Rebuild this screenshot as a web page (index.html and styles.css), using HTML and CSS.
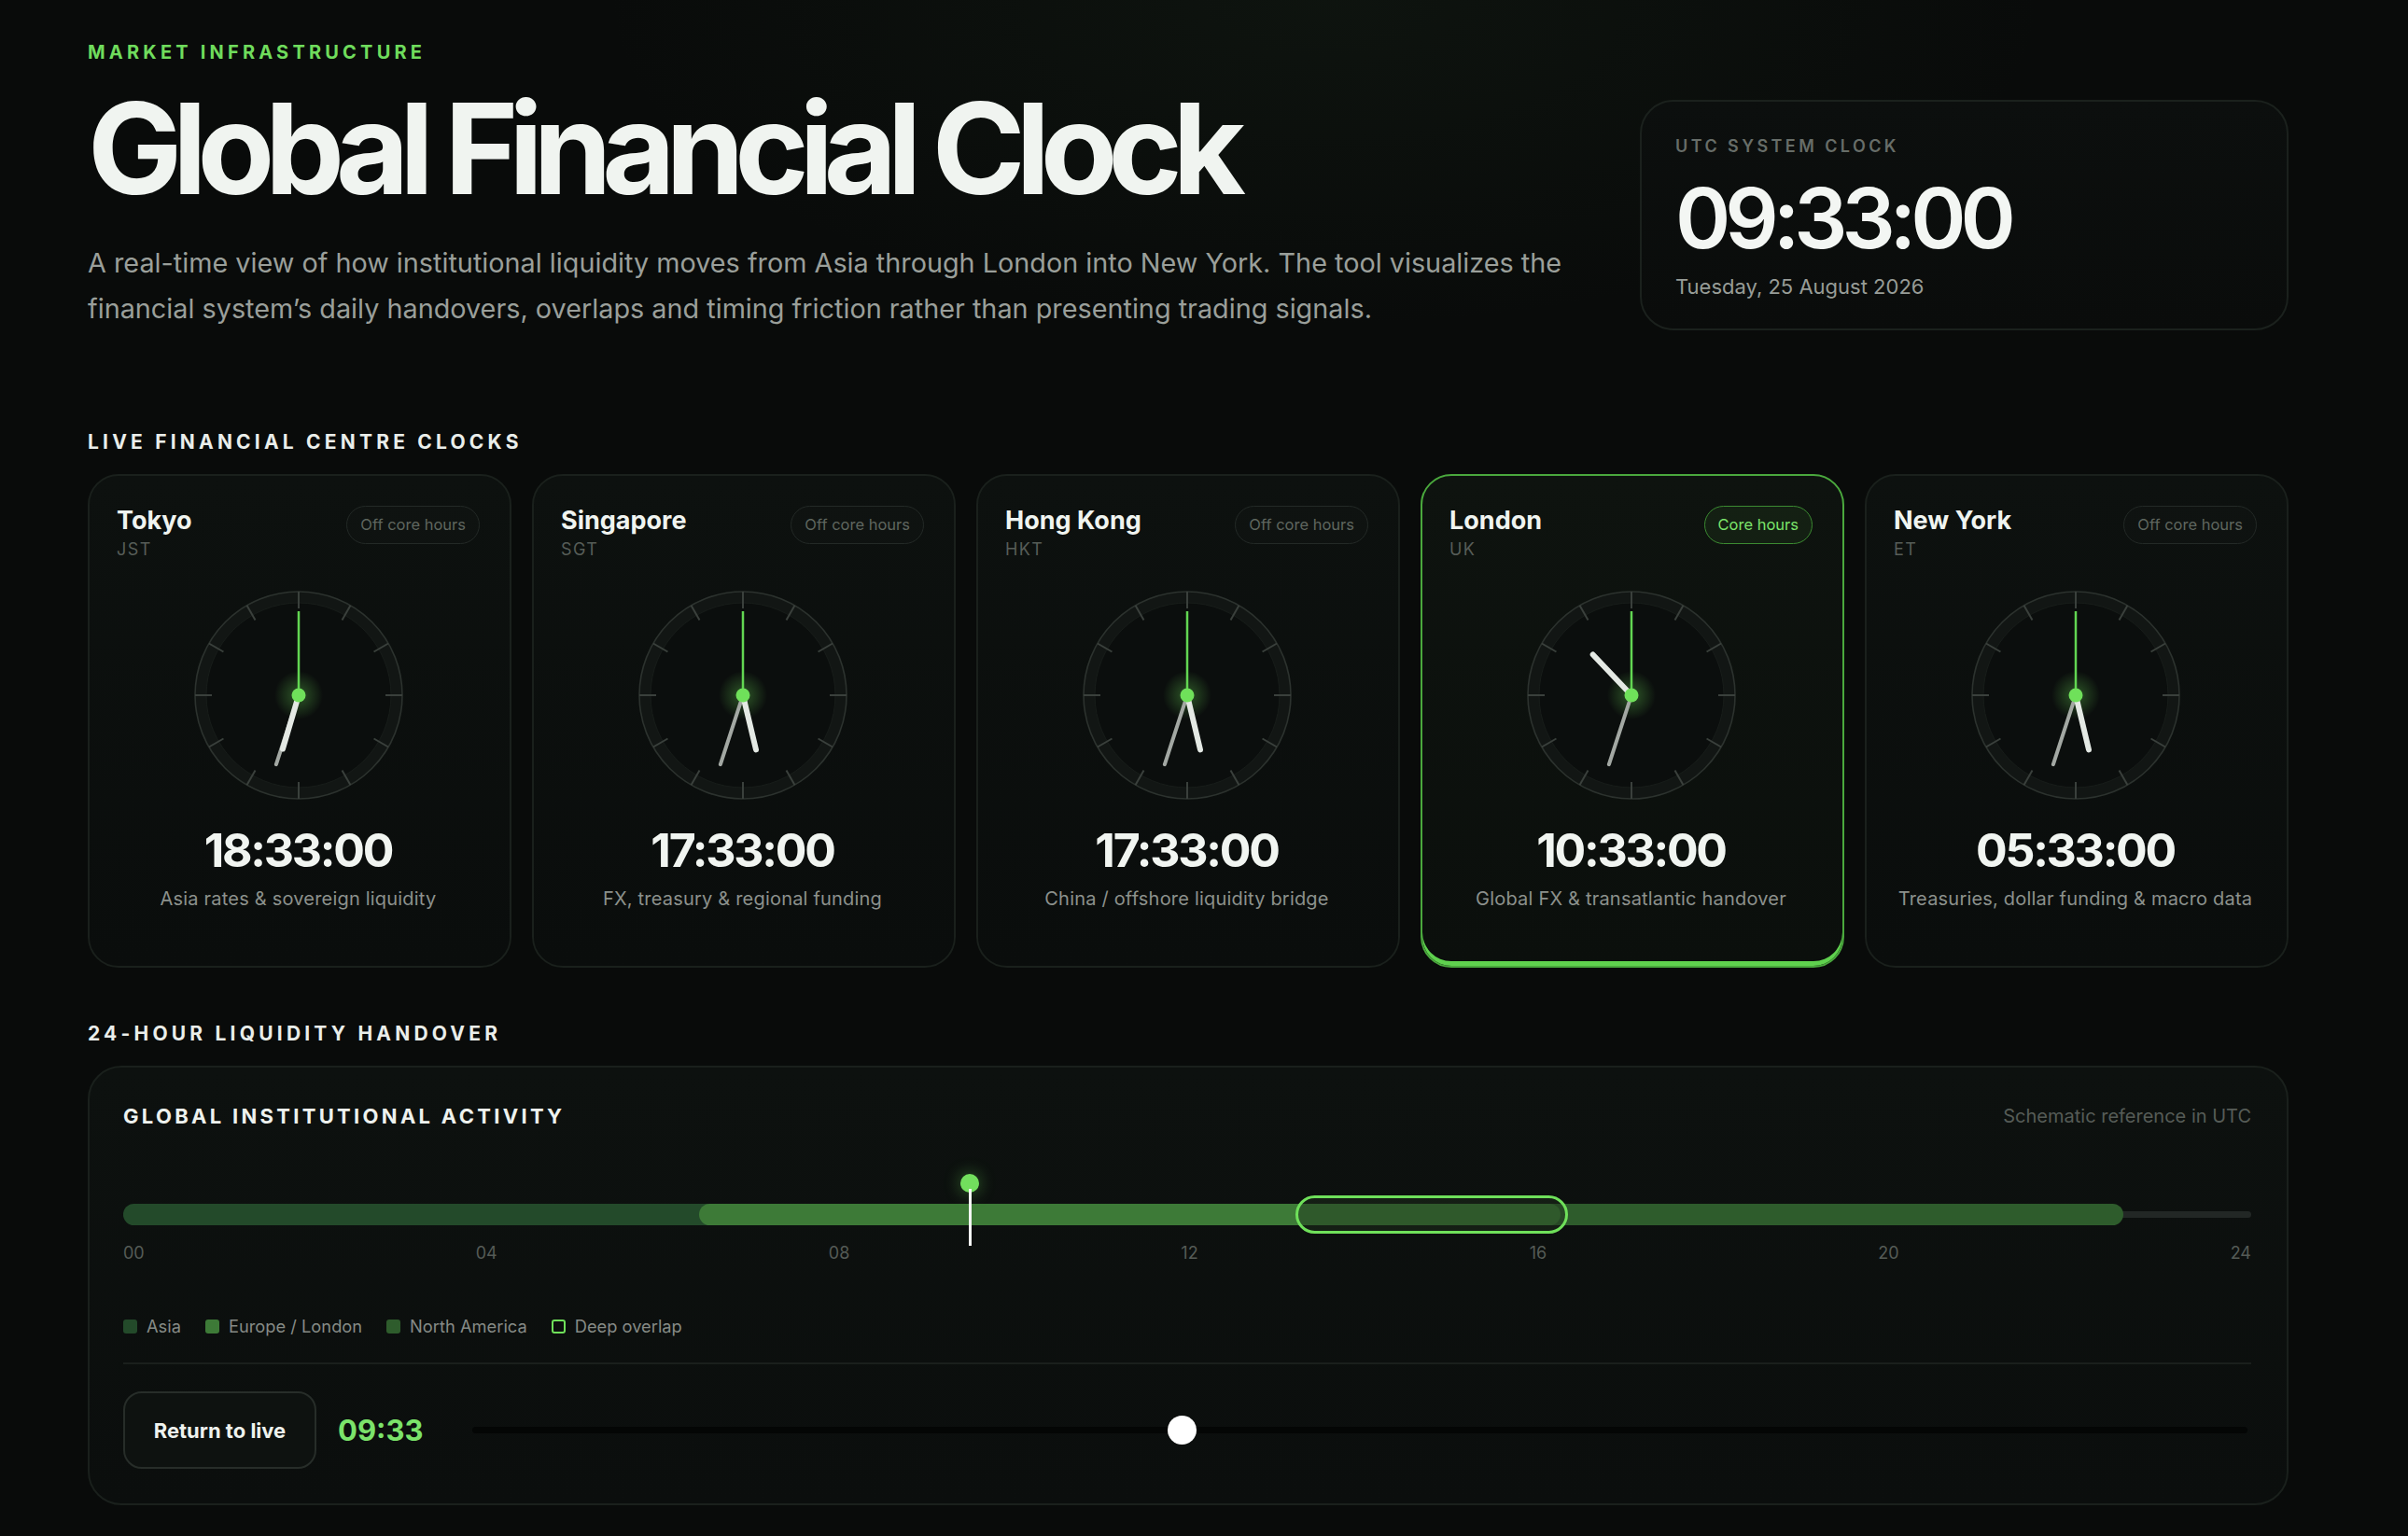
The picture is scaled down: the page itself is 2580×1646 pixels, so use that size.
FILE: index.html
```html
<!DOCTYPE html>
<html lang="en">
<head>
<meta charset="utf-8">
<title>Global Financial Clock</title>
<link rel="stylesheet" href="styles.css">
</head>
<body>
<svg class="defs" width="0" height="0" aria-hidden="true">
  <defs>
    <radialGradient id="glow">
      <stop offset="0" stop-color="#6fe05a" stop-opacity="0.35"/>
      <stop offset="1" stop-color="#6fe05a" stop-opacity="0"/>
    </radialGradient>
    <symbol id="face" viewBox="0 0 224 224">
      <circle cx="112" cy="112" r="111" fill="#121614" stroke="#2c322e" stroke-width="1.6"/>
      <circle cx="112" cy="112" r="99" fill="#0b0e0d" stroke="#181d1a" stroke-width="1"/>
      <g stroke="#3a403c" stroke-width="2">
        <line x1="112" y1="1" x2="112" y2="19"/>
        <line x1="112" y1="1" x2="112" y2="19" transform="rotate(30 112 112)"/>
        <line x1="112" y1="1" x2="112" y2="19" transform="rotate(60 112 112)"/>
        <line x1="112" y1="1" x2="112" y2="19" transform="rotate(90 112 112)"/>
        <line x1="112" y1="1" x2="112" y2="19" transform="rotate(120 112 112)"/>
        <line x1="112" y1="1" x2="112" y2="19" transform="rotate(150 112 112)"/>
        <line x1="112" y1="1" x2="112" y2="19" transform="rotate(180 112 112)"/>
        <line x1="112" y1="1" x2="112" y2="19" transform="rotate(210 112 112)"/>
        <line x1="112" y1="1" x2="112" y2="19" transform="rotate(240 112 112)"/>
        <line x1="112" y1="1" x2="112" y2="19" transform="rotate(270 112 112)"/>
        <line x1="112" y1="1" x2="112" y2="19" transform="rotate(300 112 112)"/>
        <line x1="112" y1="1" x2="112" y2="19" transform="rotate(330 112 112)"/>
      </g>
      <circle cx="112" cy="112" r="26" fill="url(#glow)"/>
    </symbol>
  </defs>
</svg>

<main class="page">
  <header class="hero">
    <div class="hero-text">
      <div class="eyebrow">MARKET INFRASTRUCTURE</div>
      <h1 class="title">Global Financial Clock</h1>
      <p class="lede">A real-time view of how institutional liquidity moves from Asia through London into New York. The tool visualizes the<br>financial system’s daily handovers, overlaps and timing friction rather than presenting trading signals.</p>
    </div>
    <div class="utc-card">
      <div class="utc-label">UTC SYSTEM CLOCK</div>
      <div class="utc-time">09:33:00</div>
      <div class="utc-date">Tuesday, 25 August 2026</div>
    </div>
  </header>

  <section class="section clocks-section">
    <h2 class="section-label">LIVE FINANCIAL CENTRE CLOCKS</h2>
    <div class="clock-grid">
      <article class="city-card">
        <div class="city-head">
          <div><div class="city-name">Tokyo</div><div class="city-tz">JST</div></div>
          <span class="badge">Off core hours</span>
        </div>
        <svg class="dial" viewBox="0 0 224 224">
          <use href="#face"/>
          <line class="hand-min" x1="112" y1="112" x2="112" y2="34" transform="rotate(198 112 112)"/>
          <line class="hand-hour" x1="112" y1="112" x2="112" y2="52" transform="rotate(196.5 112 112)"/>
          <line class="hand-sec" x1="112" y1="112" x2="112" y2="22"/>
          <circle class="hub" cx="112" cy="112" r="7.5"/>
        </svg>
        <div class="city-time">18:33:00</div>
        <div class="city-desc">Asia rates &amp; sovereign liquidity</div>
      </article>

      <article class="city-card">
        <div class="city-head">
          <div><div class="city-name">Singapore</div><div class="city-tz">SGT</div></div>
          <span class="badge">Off core hours</span>
        </div>
        <svg class="dial" viewBox="0 0 224 224">
          <use href="#face"/>
          <line class="hand-min" x1="112" y1="112" x2="112" y2="34" transform="rotate(198 112 112)"/>
          <line class="hand-hour" x1="112" y1="112" x2="112" y2="52" transform="rotate(166.5 112 112)"/>
          <line class="hand-sec" x1="112" y1="112" x2="112" y2="22"/>
          <circle class="hub" cx="112" cy="112" r="7.5"/>
        </svg>
        <div class="city-time">17:33:00</div>
        <div class="city-desc">FX, treasury &amp; regional funding</div>
      </article>

      <article class="city-card">
        <div class="city-head">
          <div><div class="city-name">Hong Kong</div><div class="city-tz">HKT</div></div>
          <span class="badge">Off core hours</span>
        </div>
        <svg class="dial" viewBox="0 0 224 224">
          <use href="#face"/>
          <line class="hand-min" x1="112" y1="112" x2="112" y2="34" transform="rotate(198 112 112)"/>
          <line class="hand-hour" x1="112" y1="112" x2="112" y2="52" transform="rotate(166.5 112 112)"/>
          <line class="hand-sec" x1="112" y1="112" x2="112" y2="22"/>
          <circle class="hub" cx="112" cy="112" r="7.5"/>
        </svg>
        <div class="city-time">17:33:00</div>
        <div class="city-desc">China / offshore liquidity bridge</div>
      </article>

      <article class="city-card active">
        <div class="city-head">
          <div><div class="city-name">London</div><div class="city-tz">UK</div></div>
          <span class="badge badge-core">Core hours</span>
        </div>
        <svg class="dial" viewBox="0 0 224 224">
          <use href="#face"/>
          <line class="hand-min" x1="112" y1="112" x2="112" y2="34" transform="rotate(198 112 112)"/>
          <line class="hand-hour" x1="112" y1="112" x2="112" y2="52" transform="rotate(316.5 112 112)"/>
          <line class="hand-sec" x1="112" y1="112" x2="112" y2="22"/>
          <circle class="hub" cx="112" cy="112" r="7.5"/>
        </svg>
        <div class="city-time">10:33:00</div>
        <div class="city-desc">Global FX &amp; transatlantic handover</div>
      </article>

      <article class="city-card">
        <div class="city-head">
          <div><div class="city-name">New York</div><div class="city-tz">ET</div></div>
          <span class="badge">Off core hours</span>
        </div>
        <svg class="dial" viewBox="0 0 224 224">
          <use href="#face"/>
          <line class="hand-min" x1="112" y1="112" x2="112" y2="34" transform="rotate(198 112 112)"/>
          <line class="hand-hour" x1="112" y1="112" x2="112" y2="52" transform="rotate(166.5 112 112)"/>
          <line class="hand-sec" x1="112" y1="112" x2="112" y2="22"/>
          <circle class="hub" cx="112" cy="112" r="7.5"/>
        </svg>
        <div class="city-time">05:33:00</div>
        <div class="city-desc">Treasuries, dollar funding &amp; macro data</div>
      </article>
    </div>
  </section>

  <section class="section handover-section">
    <h2 class="section-label">24-HOUR LIQUIDITY HANDOVER</h2>
    <div class="timeline-card">
      <div class="tl-head">
        <h3 class="tl-title">GLOBAL INSTITUTIONAL ACTIVITY</h3>
        <span class="tl-note">Schematic reference in UTC</span>
      </div>

      <div class="track">
        <div class="track-base"></div>
        <div class="seg seg-asia" style="left:0%;width:37.5%"></div>
        <div class="seg seg-na" style="left:54.17%;width:39.83%"></div>
        <div class="seg seg-eu" style="left:27.04%;width:40.5%"></div>
        <div class="overlap" style="left:55.08%;width:12.83%"></div>
        <div class="now" style="left:39.79%"><span class="now-dot"></span><span class="now-line"></span></div>
      </div>
      <div class="hours">
        <span>00</span><span>04</span><span>08</span><span>12</span><span>16</span><span>20</span><span>24</span>
      </div>

      <ul class="legend">
        <li><span class="sw sw-asia"></span>Asia</li>
        <li><span class="sw sw-eu"></span>Europe / London</li>
        <li><span class="sw sw-na"></span>North America</li>
        <li><span class="sw sw-overlap"></span>Deep overlap</li>
      </ul>

      <div class="controls">
        <button class="live-btn" type="button">Return to live</button>
        <span class="scrub-time">09:33</span>
        <div class="slider"><span class="thumb" style="left:39.95%"></span></div>
      </div>
    </div>
  </section>
</main>
</body>
</html>
```

FILE: styles.css
```css
* { box-sizing: border-box; }

html, body {
  margin: 0;
  padding: 0;
  background: #090b0a;
}

body {
  font-family: Inter, "Noto Sans", "DejaVu Sans", sans-serif;
  color: #eef2ee;
  min-height: 1646px;
  background:
    radial-gradient(ellipse 1100px 500px at 55% 0%, rgba(40, 64, 40, 0.16), rgba(0,0,0,0) 70%),
    #090b0a;
}

.defs { position: absolute; width: 0; height: 0; overflow: hidden; }

.page {
  padding: 44px 128px 40px 94px;
}

/* ---------- header ---------- */
.hero {
  display: flex;
  justify-content: space-between;
  align-items: flex-end;
}

.eyebrow {
  font-size: 20px;
  line-height: 24px;
  font-weight: 700;
  letter-spacing: 0.21em;
  color: #6fdc5c;
}

.title {
  margin: 24px 0 0;
  font-size: 135px;
  line-height: 1;
  font-weight: 700;
  letter-spacing: -0.076em;
  color: #f0f4f0;
}

.lede {
  margin: 30px 0 0;
  font-size: 28.8px;
  line-height: 49px;
  color: #9a9f9a;
  white-space: nowrap;
}

.utc-card {
  width: 695px;
  height: 247px;
  margin-bottom: 1px;
  padding: 37px 38px 0 36px;
  border: 2px solid #1b211d;
  border-radius: 36px;
  background: linear-gradient(180deg, #0c0f0e 0%, #0a0c0b 100%);
}

.utc-label {
  font-size: 18px;
  line-height: 22px;
  font-weight: 600;
  letter-spacing: 0.19em;
  color: #676d68;
}

.utc-time {
  margin-top: 21px;
  font-size: 90px;
  line-height: 1;
  font-weight: 600;
  letter-spacing: -0.068em;
  color: #f3f6f3;
}

.utc-date {
  margin-top: 14px;
  font-size: 22px;
  line-height: 28px;
  color: #979c97;
}

/* ---------- sections ---------- */
.section-label {
  margin: 0 0 22px;
  font-size: 21px;
  line-height: 25px;
  font-weight: 700;
  letter-spacing: 0.2em;
  color: #eaeeea;
}

.clocks-section { margin-top: 106px; }
.handover-section { margin-top: 58px; }

/* ---------- city cards ---------- */
.clock-grid {
  display: grid;
  grid-template-columns: repeat(5, 1fr);
  gap: 22px;
}

.city-card {
  height: 529px;
  padding: 32px 32px 0 29px;
  border: 2px solid #1a201c;
  border-radius: 33px;
  background: linear-gradient(180deg, #0d110f 0%, #0a0d0c 100%);
  display: flex;
  flex-direction: column;
  align-items: center;
}

.city-card.active {
  border-color: #4aa83d;
  box-shadow: inset 0 -5px 0 #5fd14e;
  background: linear-gradient(180deg, #0e130f 0%, #0b0f0c 100%);
}

.city-head {
  align-self: stretch;
  display: flex;
  justify-content: space-between;
  align-items: flex-start;
}

.city-name {
  font-size: 27px;
  line-height: 32px;
  font-weight: 700;
  color: #f0f4f0;
}

.city-tz {
  margin-top: 4px;
  font-size: 18px;
  line-height: 22px;
  letter-spacing: 0.08em;
  color: #575d58;
}

.badge {
  height: 41px;
  padding: 0 14px;
  border: 1.5px solid #232926;
  border-radius: 21px;
  font-size: 16.5px;
  line-height: 38px;
  color: #5f665f;
  background: rgba(255, 255, 255, 0.012);
}

.badge-core {
  border-color: #3b8a31;
  color: #7be36a;
  background: rgba(95, 209, 78, 0.07);
}

.dial {
  width: 224px;
  height: 224px;
  margin-top: 33px;
  display: block;
}

.hand-hour { stroke: #e4e9e4; stroke-width: 6; stroke-linecap: round; }
.hand-min  { stroke: #a3a8a3; stroke-width: 4; stroke-linecap: round; }
.hand-sec  { stroke: #62d652; stroke-width: 2.5; }
.hub { fill: #6fe05a; }

.city-time {
  margin-top: 24px;
  font-size: 50px;
  line-height: 60px;
  font-weight: 700;
  letter-spacing: -0.045em;
  color: #f1f5f1;
}

.city-desc {
  margin-top: 9px;
  font-size: 20px;
  line-height: 27px;
  color: #8c918c;
  letter-spacing: 0.01em;
  white-space: nowrap;
}

/* ---------- timeline ---------- */
.timeline-card {
  padding: 39px 38px 37px 36px;
  border: 2px solid #1a201c;
  border-radius: 36px;
  background: linear-gradient(180deg, #0d110f 0%, #0b0e0d 100%);
}

.tl-head {
  display: flex;
  justify-content: space-between;
  align-items: center;
}

.tl-title {
  margin: 0;
  font-size: 22px;
  line-height: 26px;
  font-weight: 700;
  letter-spacing: 0.15em;
  color: #eef2ee;
}

.tl-note {
  font-size: 20px;
  line-height: 26px;
  color: #565c57;
}

.track {
  position: relative;
  height: 64px;
  margin-top: 56px;
}

.track-base {
  position: absolute;
  left: 0;
  right: 0;
  top: 33px;
  height: 7px;
  border-radius: 4px;
  background: #222725;
}

.seg {
  position: absolute;
  top: 25px;
  height: 23px;
  border-radius: 12px;
}
.seg-asia { background: #234a2a; }
.seg-eu   { background: #3d7a37; }
.seg-na   { background: #2e5c2c; }

.overlap {
  position: absolute;
  top: 16px;
  height: 41px;
  border: 3px solid #6fe05a;
  border-radius: 21px;
  background: rgba(30, 48, 29, 0.45);
}

.now {
  position: absolute;
  top: 0;
  width: 0;
}
.now-dot {
  position: absolute;
  left: -10px;
  top: -7px;
  width: 20px;
  height: 20px;
  border-radius: 50%;
  background: #72df5d;
  box-shadow: 0 0 18px rgba(111, 224, 90, 0.45);
}
.now-line {
  position: absolute;
  left: -1.5px;
  top: 9px;
  width: 3px;
  height: 61px;
  background: #f5f7f5;
}

.hours {
  margin-top: 3px;
  display: flex;
  justify-content: space-between;
  font-size: 18px;
  line-height: 22px;
  color: #555b56;
}

.legend {
  list-style: none;
  margin: 56px 0 0;
  padding: 0 0 28px;
  display: flex;
  gap: 26px;
  font-size: 18.3px;
  line-height: 22px;
  color: #868b86;
  border-bottom: 2px solid #1a1f1c;
}
.legend li {
  display: flex;
  align-items: center;
  gap: 10px;
}
.sw {
  width: 15px;
  height: 15px;
  border-radius: 3px;
}
.sw-asia { background: #234a2a; }
.sw-eu   { background: #3d7a37; }
.sw-na   { background: #2e5c2c; }
.sw-overlap { border: 2px solid #6fe05a; }

.controls {
  padding-top: 29px;
  display: flex;
  align-items: center;
}

.live-btn {
  width: 207px;
  height: 83px;
  border: 2px solid #272d29;
  border-radius: 20px;
  background: #0e1210;
  font-family: inherit;
  font-size: 22px;
  font-weight: 700;
  color: #eef2ee;
  padding: 0;
}

.scrub-time {
  margin-left: 23px;
  font-size: 31px;
  font-weight: 700;
  color: #7be36a;
}

.slider {
  position: relative;
  flex: 1;
  height: 7px;
  margin-left: 53px;
  margin-right: 4px;
  border-radius: 4px;
  background: #040605;
}

.thumb {
  position: absolute;
  top: 50%;
  width: 31px;
  height: 31px;
  margin: -15.5px 0 0 -15.5px;
  border-radius: 50%;
  background: #ffffff;
}
```
